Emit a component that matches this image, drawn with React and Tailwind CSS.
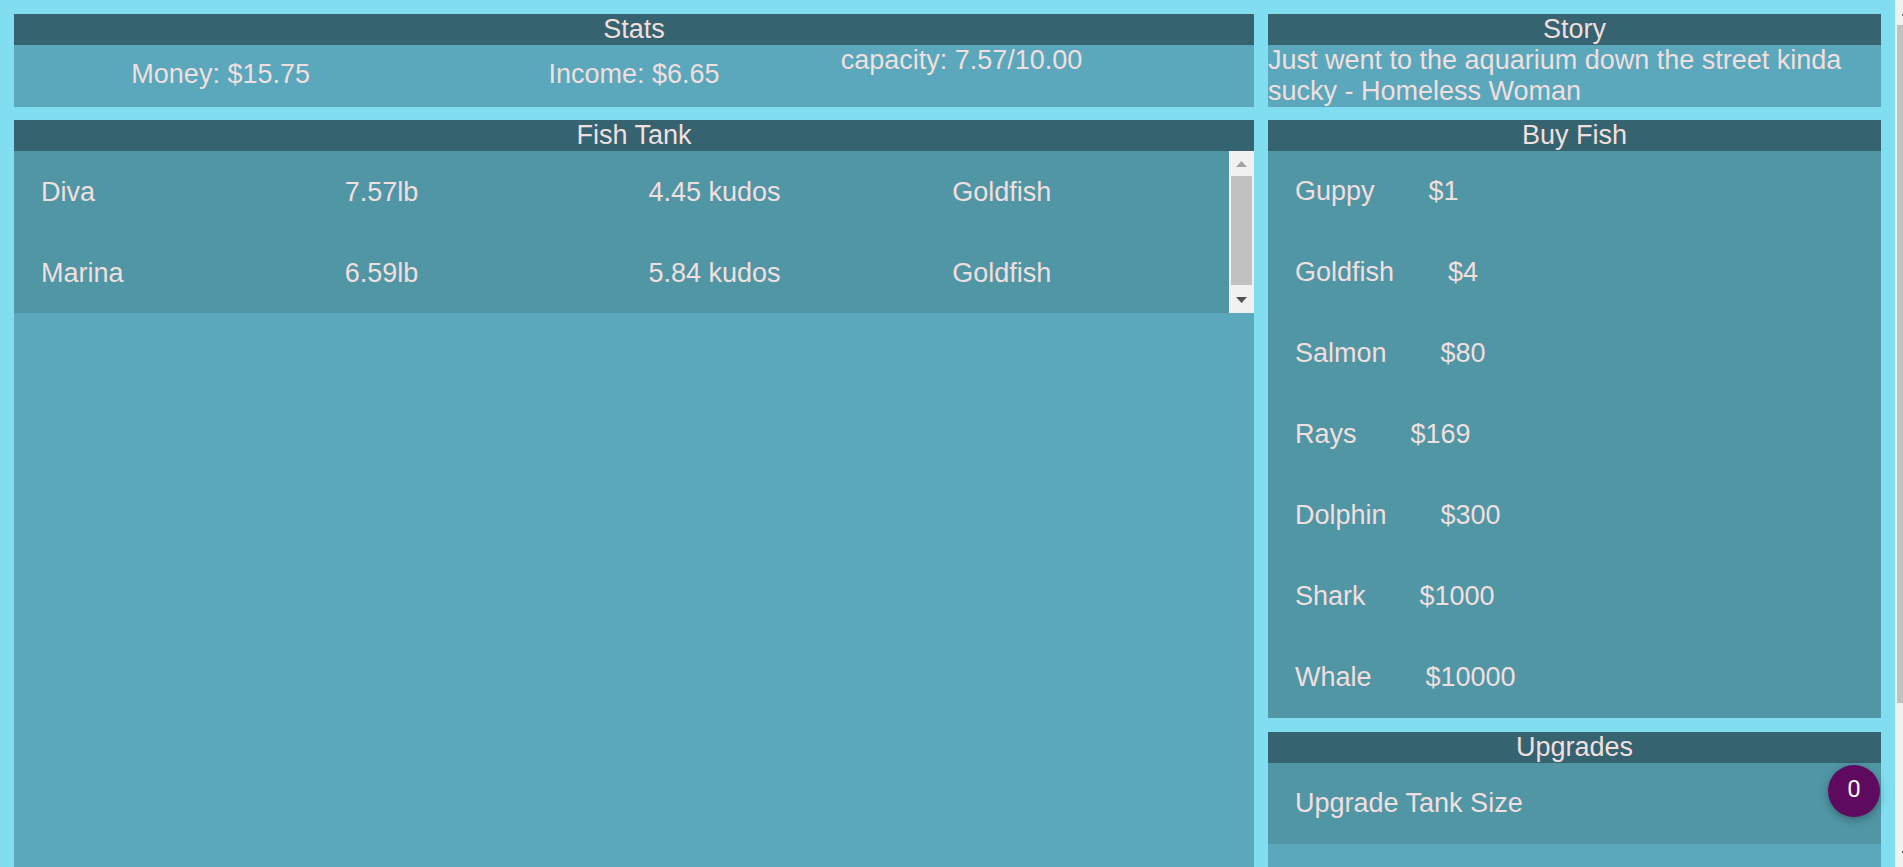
import React from "react";

const FONT = { fontFamily: '"Liberation Sans", Arial, sans-serif' };

function Header({ children }) {
  return (
    <div className="h-[31px] bg-[#35636f] text-center leading-[31px] shrink-0">{children}</div>
  );
}

const fishes = [
  { name: "Diva", weight: "7.57lb", kudos: "4.45 kudos", type: "Goldfish" },
  { name: "Marina", weight: "6.59lb", kudos: "5.84 kudos", type: "Goldfish" },
];

const shop = [
  ["Guppy", "$1"],
  ["Goldfish", "$4"],
  ["Salmon", "$80"],
  ["Rays", "$169"],
  ["Dolphin", "$300"],
  ["Shark", "$1000"],
  ["Whale", "$10000"],
];

function ListScrollbar() {
  return (
    <div className="w-[25px] h-full bg-[#f1f1f1] flex flex-col shrink-0">
      <div className="h-[25px] shrink-0">
        <svg width="25" height="25" viewBox="0 0 25 25">
          <polygon points="7,16 18,16 12.5,10" fill="#a3a3a3" />
        </svg>
      </div>
      <div className="flex-1 px-[2px]">
        <div className="h-[109px] bg-[#c1c1c1]" />
      </div>
      <div className="h-[25px] shrink-0">
        <svg width="25" height="25" viewBox="0 0 25 25">
          <polygon points="7,9 18,9 12.5,15" fill="#505050" />
        </svg>
      </div>
    </div>
  );
}

export default function App() {
  return (
    <div
      className="w-[1903px] h-[867px] overflow-hidden flex bg-[#80def0] text-[27px] leading-[31px] text-[#f0dfdf]"
      style={FONT}
    >
      <div className="w-[1895px] h-full pt-[14px] px-[14px] flex gap-[14px]">
        {/* Left column */}
        <div className="w-[1240px] h-full flex flex-col gap-[13px]">
          {/* Stats */}
          <div className="h-[93px] flex flex-col shrink-0">
            <Header>Stats</Header>
            <div className="h-[62px] bg-[#5ba7bb] grid grid-cols-3">
              <div className="text-center pt-[14px]">Money: $15.75</div>
              <div className="text-center pt-[14px]">Income: $6.65</div>
              <div className="text-left">capacity: 7.57/10.00</div>
            </div>
          </div>
          {/* Fish Tank */}
          <div className="flex-1 flex flex-col bg-[#5ba7bb]">
            <Header>Fish Tank</Header>
            <div className="h-[162px] flex">
              <div className="flex-1 overflow-hidden bg-[#5196a5]">
                {fishes.map((f) => (
                  <div key={f.name} className="h-[81px] grid grid-cols-4 items-center pt-[2px]">
                    <div className="pl-[27px]">{f.name}</div>
                    <div className="pl-[27px]">{f.weight}</div>
                    <div className="pl-[27px]">{f.kudos}</div>
                    <div className="pl-[27px]">{f.type}</div>
                  </div>
                ))}
              </div>
              <ListScrollbar />
            </div>
          </div>
        </div>

        {/* Right column */}
        <div className="w-[613px] h-full flex flex-col">
          {/* Story */}
          <div className="h-[93px] flex flex-col shrink-0">
            <Header>Story</Header>
            <div className="h-[62px] bg-[#5ba7bb]">
              Just went to the aquarium down the street kinda sucky - Homeless Woman
            </div>
          </div>
          {/* Buy Fish */}
          <div className="mt-[13px] flex flex-col shrink-0">
            <Header>Buy Fish</Header>
            <div className="bg-[#5196a5]">
              {shop.map(([n, p]) => (
                <div key={n} className="h-[81px] flex items-center pl-[27px]">
                  <span>{n}</span>
                  <span className="ml-[54px]">{p}</span>
                </div>
              ))}
            </div>
          </div>
          {/* Upgrades */}
          <div className="mt-[14px] flex-1 flex flex-col bg-[#5ba7bb]">
            <Header>Upgrades</Header>
            <div className="relative h-[81px] bg-[#5196a5] flex items-center pl-[27px]">
              <span>Upgrade Tank Size</span>
              <div
                className="absolute right-[1px] top-[2px] w-[52px] h-[52px] rounded-full bg-[#5e0a5e] text-[#f5f5f5] flex items-center justify-center text-[24px] leading-none pb-[4px] shadow-[0_3px_8px_rgba(0,0,0,0.3)]"
                style={{ fontFamily: 'Roboto, "Liberation Sans", sans-serif' }}
              >
                0
              </div>
            </div>
          </div>
        </div>
      </div>

      {/* Partial page scrollbar */}
      <div className="w-[8px] h-full bg-[#f1f1f1] flex flex-col">
        <div className="h-[25px] shrink-0 flex justify-end pt-[14px]">
          <div className="w-[1px] h-[2px] bg-[#707070]" />
        </div>
        <div className="h-[678px] ml-[2px] bg-[#c1c1c1] shrink-0" />
        <div className="flex-1 flex justify-end items-end pb-[14px]">
          <div className="w-[1px] h-[2px] bg-[#505050]" />
        </div>
      </div>
    </div>
  );
}
